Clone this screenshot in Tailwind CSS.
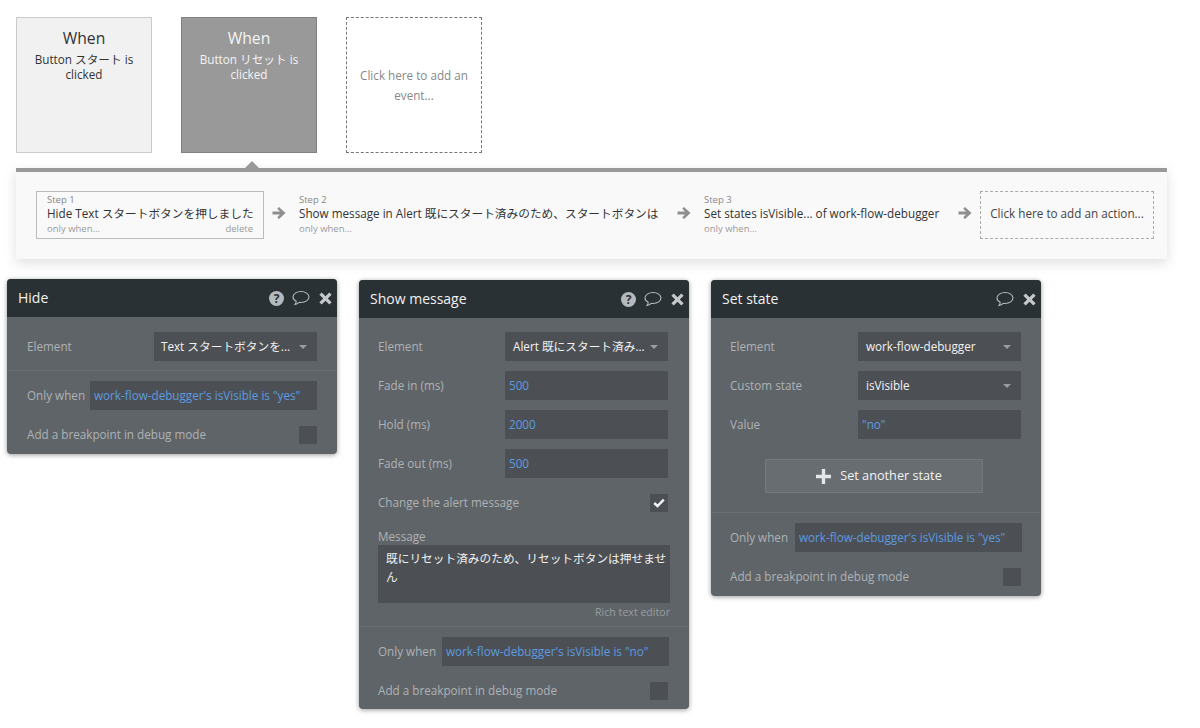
<!DOCTYPE html>
<html lang="en">

<head>
    <meta charset="UTF-8" />
    <title>Workflow</title>
    <script src="https://cdn.jsdelivr.net/npm/@tailwindcss/browser@4"></script>
</head>

<body class="bg-white font-['Open_Sans','Noto_Sans_CJK_JP',sans-serif] text-[11.7px] w-[1200px] h-[728px] overflow-hidden">
    <!-- Events -->
    <div class="flex gap-[29px] pt-[17px] pl-[16px]">
        <div class="w-[136px] h-[136px] bg-[#f1f1f1] border border-[#c8cccc] text-center text-[#333] pt-[9px] px-[4px]">
            <div class="text-[15.7px] leading-[22px]">When</div>
            <div class="leading-[15px] mt-[3px]">Button スタート is<br>clicked</div>
        </div>
        <div class="w-[136px] h-[136px] bg-[#999999] border border-[#808080] text-center text-[#f4f4f4] pt-[9px] px-[4px]">
            <div class="text-[15.7px] leading-[22px]">When</div>
            <div class="leading-[15px] mt-[3px]">Button リセット is<br>clicked</div>
        </div>
        <div class="w-[136px] h-[136px] border border-dashed border-[#777] flex items-center justify-center text-center text-[#888] leading-[20px]">
            Click here to add an<br>event...
        </div>
    </div>

    <!-- Steps -->
    <div class="relative ml-[16px] mt-[15px] w-[1151px] h-[91px] bg-[#f9f9f9] border-t-4 border-[#999999] shadow-[0_4px_12px_rgba(0,0,0,0.13)] flex items-start pl-[20px] pt-[19px]">
        <div class="absolute left-[229px] top-[-11px] w-0 h-0 border-x-[7px] border-x-transparent border-b-[7px] border-b-[#999999]"></div>

        <div class="w-[228px] h-[48px] border border-[#b8bcbc] px-[10px] text-[#333] shrink-0">
            <div class="text-[9.5px] leading-[12px] text-[#888] pt-[2px]">Step 1</div>
            <div class="leading-[15px] whitespace-nowrap">Hide Text スタートボタンを押しました</div>
            <div class="flex justify-between text-[9.5px] leading-[12px] text-[#999] pt-[2px]"><span>only when...</span><span>delete</span></div>
        </div>
        <svg class="w-[14px] h-[14px] mt-[15px] ml-[8px] mr-[13px] shrink-0" viewBox="0 0 14 14" fill="#8f8f8f"><path d="M7 1L13.5 7L7 13L5.2 11.2L8 8.6H.5V5.4H8L5.2 2.8Z" /></svg>

        <div class="w-[365px] h-[48px] text-[#333] shrink-0">
            <div class="text-[9.5px] leading-[12px] text-[#888] pt-[3px]">Step 2</div>
            <div class="leading-[15px] whitespace-nowrap">Show message in Alert 既にスタート済みのため、スタートボタンは</div>
            <div class="text-[9.5px] leading-[12px] text-[#999] pt-[2px]">only when...</div>
        </div>
        <svg class="w-[14px] h-[14px] mt-[15px] ml-[13px] mr-[13px] shrink-0" viewBox="0 0 14 14" fill="#8f8f8f"><path d="M7 1L13.5 7L7 13L5.2 11.2L8 8.6H.5V5.4H8L5.2 2.8Z" /></svg>

        <div class="w-[241px] h-[48px] text-[#333] shrink-0">
            <div class="text-[9.5px] leading-[12px] text-[#888] pt-[3px]">Step 3</div>
            <div class="leading-[15px] whitespace-nowrap">Set states isVisible... of work-flow-debugger</div>
            <div class="text-[9.5px] leading-[12px] text-[#999] pt-[2px]">only when...</div>
        </div>
        <svg class="w-[14px] h-[14px] mt-[15px] ml-[13px] mr-[8px] shrink-0" viewBox="0 0 14 14" fill="#8f8f8f"><path d="M7 1L13.5 7L7 13L5.2 11.2L8 8.6H.5V5.4H8L5.2 2.8Z" /></svg>

        <div class="w-[174px] h-[48px] border border-dashed border-[#aaa] flex items-center justify-center text-[#444] whitespace-nowrap shrink-0 pb-[3px]">Click here to add an action...</div>
    </div>

    <!-- Property editors -->
    <div class="flex items-start gap-[22px] pl-[7px] mt-[20px]">

        <!-- Hide -->
        <div class="w-[330px] h-[175px] rounded-[4px] bg-[#5f6468] shadow-[0_1px_5px_rgba(0,0,0,0.4)] overflow-hidden">
            <div class="h-[38px] bg-[#2a3134] flex items-center pl-[11px] pr-[5px]">
                <span class="text-[#f2f2f2] text-[14px] flex-1 pb-[2px]">Hide</span>
                <span class="w-[15px] h-[15px] rounded-full bg-[#b4b9bc] text-[#2a3134] text-[12px] font-bold leading-[15px] text-center mr-[8px]">?</span>
                <svg class="w-[18px] h-[16px] mr-[9px]" viewBox="0 0 18 16" fill="none" stroke="#b4b9bc" stroke-width="1.1"><path d="M9 1.5C4.6 1.5 1 3.9 1 7C1 8.8 2.3 10.3 4.2 11.3C4.2 12.5 3.7 13.6 3 14.5C4.7 14.2 6.2 13.3 7.3 12.4C7.9 12.5 8.4 12.5 9 12.5C13.4 12.5 17 10.1 17 7C17 3.9 13.4 1.5 9 1.5Z" /></svg>
                <svg class="w-[13px] h-[13px]" viewBox="0 0 13 13" fill="#c4c8ca"><path d="M2.7.4L6.5 4.2L10.3.4L12.6 2.7L8.8 6.5L12.6 10.3L10.3 12.6L6.5 8.8L2.7 12.6L.4 10.3L4.2 6.5L.4 2.7Z" /></svg>
            </div>
            <div class="px-[20px] pt-[15px] pb-[9px] border-b border-[#6b7074] flex justify-between items-center h-[54px]">
                <span class="text-[#aeb2b5] pt-[1px]">Element</span>
                <div class="w-[163px] h-[29px] bg-[#4c5054] text-[#f2f2f2] pl-[7px] pr-[10px] flex items-center justify-between whitespace-nowrap"><span>Text スタートボタンを...</span><span class="w-0 h-0 border-x-[4px] border-x-transparent border-t-[4px] border-t-[#9a9ea1]"></span></div>
            </div>
            <div class="px-[20px] pt-[10px] flex justify-between items-center">
                <span class="text-[#aeb2b5] whitespace-nowrap pt-[1px]">Only when</span>
                <div class="w-[227px] h-[29px] bg-[#4c5054] text-[#5b9be0] pl-[4px] flex items-center whitespace-nowrap">work-flow-debugger's isVisible is "yes"</div>
            </div>
            <div class="px-[20px] mt-[16px] flex justify-between items-center">
                <span class="text-[#aeb2b5]">Add a breakpoint in debug mode</span>
                <div class="w-[18px] h-[18px] bg-[#4c5054]"></div>
            </div>
        </div>

        <!-- Show message -->
        <div class="w-[330px] h-[429px] mt-[1px] rounded-[4px] bg-[#5f6468] shadow-[0_1px_5px_rgba(0,0,0,0.4)] overflow-hidden">
            <div class="h-[38px] bg-[#2a3134] flex items-center pl-[11px] pr-[5px]">
                <span class="text-[#f2f2f2] text-[14px] flex-1 pb-[2px]">Show message</span>
                <span class="w-[15px] h-[15px] rounded-full bg-[#b4b9bc] text-[#2a3134] text-[12px] font-bold leading-[15px] text-center mr-[8px]">?</span>
                <svg class="w-[18px] h-[16px] mr-[9px]" viewBox="0 0 18 16" fill="none" stroke="#b4b9bc" stroke-width="1.1"><path d="M9 1.5C4.6 1.5 1 3.9 1 7C1 8.8 2.3 10.3 4.2 11.3C4.2 12.5 3.7 13.6 3 14.5C4.7 14.2 6.2 13.3 7.3 12.4C7.9 12.5 8.4 12.5 9 12.5C13.4 12.5 17 10.1 17 7C17 3.9 13.4 1.5 9 1.5Z" /></svg>
                <svg class="w-[13px] h-[13px]" viewBox="0 0 13 13" fill="#c4c8ca"><path d="M2.7.4L6.5 4.2L10.3.4L12.6 2.7L8.8 6.5L12.6 10.3L10.3 12.6L6.5 8.8L2.7 12.6L.4 10.3L4.2 6.5L.4 2.7Z" /></svg>
            </div>
            <div class="px-[19px] pt-[14px] flex flex-col gap-[10px]">
                <div class="flex justify-between items-center pr-[2px]">
                    <span class="text-[#aeb2b5] pt-[1px]">Element</span>
                    <div class="w-[163px] h-[29px] bg-[#4c5054] text-[#f2f2f2] pl-[8px] pr-[10px] flex items-center justify-between whitespace-nowrap"><span>Alert 既にスタート済み...</span><span class="w-0 h-0 border-x-[4px] border-x-transparent border-t-[4px] border-t-[#9a9ea1]"></span></div>
                </div>
                <div class="flex justify-between items-center pr-[2px]">
                    <span class="text-[#aeb2b5] pt-[1px]">Fade in (ms)</span>
                    <div class="w-[163px] h-[29px] bg-[#4c5054] text-[#5b9be0] pl-[4px] flex items-center">500</div>
                </div>
                <div class="flex justify-between items-center pr-[2px]">
                    <span class="text-[#aeb2b5] pt-[1px]">Hold (ms)</span>
                    <div class="w-[163px] h-[29px] bg-[#4c5054] text-[#5b9be0] pl-[4px] flex items-center">2000</div>
                </div>
                <div class="flex justify-between items-center pr-[2px]">
                    <span class="text-[#aeb2b5] pt-[1px]">Fade out (ms)</span>
                    <div class="w-[163px] h-[29px] bg-[#4c5054] text-[#5b9be0] pl-[4px] flex items-center">500</div>
                </div>
            </div>
            <div class="pl-[19px] pr-[21px] mt-[16px] flex justify-between items-center">
                <span class="text-[#aeb2b5]">Change the alert message</span>
                <div class="w-[18px] h-[18px] bg-[#4c5054] flex items-center justify-center">
                    <svg class="w-[12px] h-[10px]" viewBox="0 0 12 10" fill="none" stroke="#f4f4f4" stroke-width="2.4"><path d="M1.2 5L4.5 8L10.8 1.6" /></svg>
                </div>
            </div>
            <div class="px-[19px] mt-[16px] pb-[7px] border-b border-[#6b7074]">
                <div class="text-[#aeb2b5] leading-[17px]">Message</div>
                <div class="h-[58px] bg-[#4c5054] text-[#f2f2f2] pl-[8px] pr-[2px] pt-[4px] leading-[18px]">既にリセット済みのため、リセットボタンは押せません</div>
                <div class="text-right text-[#999da0] text-[10.6px] leading-[14px] mt-[2px]">Rich text editor</div>
            </div>
            <div class="pl-[19px] pr-[20px] pt-[10px] flex justify-between items-center">
                <span class="text-[#aeb2b5] whitespace-nowrap pt-[1px]">Only when</span>
                <div class="w-[227px] h-[29px] bg-[#4c5054] text-[#5b9be0] pl-[4px] flex items-center whitespace-nowrap">work-flow-debugger's isVisible is "no"</div>
            </div>
            <div class="pl-[19px] pr-[21px] mt-[16px] flex justify-between items-center">
                <span class="text-[#aeb2b5]">Add a breakpoint in debug mode</span>
                <div class="w-[18px] h-[18px] bg-[#4c5054]"></div>
            </div>
        </div>

        <!-- Set state -->
        <div class="w-[330px] h-[316px] mt-[1px] rounded-[4px] bg-[#5f6468] shadow-[0_1px_5px_rgba(0,0,0,0.4)] overflow-hidden">
            <div class="h-[38px] bg-[#2a3134] flex items-center pl-[11px] pr-[5px]">
                <span class="text-[#f2f2f2] text-[14px] flex-1 pb-[2px]">Set state</span>
                <svg class="w-[18px] h-[16px] mr-[9px]" viewBox="0 0 18 16" fill="none" stroke="#b4b9bc" stroke-width="1.1"><path d="M9 1.5C4.6 1.5 1 3.9 1 7C1 8.8 2.3 10.3 4.2 11.3C4.2 12.5 3.7 13.6 3 14.5C4.7 14.2 6.2 13.3 7.3 12.4C7.9 12.5 8.4 12.5 9 12.5C13.4 12.5 17 10.1 17 7C17 3.9 13.4 1.5 9 1.5Z" /></svg>
                <svg class="w-[13px] h-[13px]" viewBox="0 0 13 13" fill="#c4c8ca"><path d="M2.7.4L6.5 4.2L10.3.4L12.6 2.7L8.8 6.5L12.6 10.3L10.3 12.6L6.5 8.8L2.7 12.6L.4 10.3L4.2 6.5L.4 2.7Z" /></svg>
            </div>
            <div class="pl-[19px] pr-[20px] pt-[14px] flex flex-col gap-[10px]">
                <div class="flex justify-between items-center">
                    <span class="text-[#aeb2b5] pt-[1px]">Element</span>
                    <div class="w-[163px] h-[29px] bg-[#4c5054] text-[#f2f2f2] pl-[8px] pr-[10px] flex items-center justify-between whitespace-nowrap"><span>work-flow-debugger</span><span class="w-0 h-0 border-x-[4px] border-x-transparent border-t-[4px] border-t-[#9a9ea1]"></span></div>
                </div>
                <div class="flex justify-between items-center">
                    <span class="text-[#aeb2b5] pt-[1px]">Custom state</span>
                    <div class="w-[163px] h-[29px] bg-[#4c5054] text-[#f2f2f2] pl-[8px] pr-[10px] flex items-center justify-between whitespace-nowrap"><span>isVisible</span><span class="w-0 h-0 border-x-[4px] border-x-transparent border-t-[4px] border-t-[#9a9ea1]"></span></div>
                </div>
                <div class="flex justify-between items-center">
                    <span class="text-[#aeb2b5] pt-[1px]">Value</span>
                    <div class="w-[163px] h-[29px] bg-[#4c5054] text-[#5b9be0] pl-[4px] flex items-center">"no"</div>
                </div>
            </div>
            <div class="pt-[20px] pb-[19px] pl-[54px] border-b border-[#6b7074]">
                <div class="w-[218px] h-[34px] bg-[#686d71] border border-[#74797d] flex items-center justify-center gap-[9px] pl-[10px] text-[12.7px] text-[#f2f2f2]">
                    <svg class="w-[15px] h-[15px]" viewBox="0 0 15 15" fill="#e4e6e7"><path d="M5.8 0H9.2V5.8H15V9.2H9.2V15H5.8V9.2H0V5.8H5.8Z" /></svg>
                    <span>Set another state</span>
                </div>
            </div>
            <div class="pl-[19px] pr-[19px] pt-[10px] flex justify-between items-center">
                <span class="text-[#aeb2b5] whitespace-nowrap pt-[1px]">Only when</span>
                <div class="w-[227px] h-[29px] bg-[#4c5054] text-[#5b9be0] pl-[4px] flex items-center whitespace-nowrap">work-flow-debugger's isVisible is "yes"</div>
            </div>
            <div class="pl-[19px] pr-[20px] mt-[16px] flex justify-between items-center">
                <span class="text-[#aeb2b5]">Add a breakpoint in debug mode</span>
                <div class="w-[18px] h-[18px] bg-[#4c5054]"></div>
            </div>
        </div>
    </div>
</body>

</html>
